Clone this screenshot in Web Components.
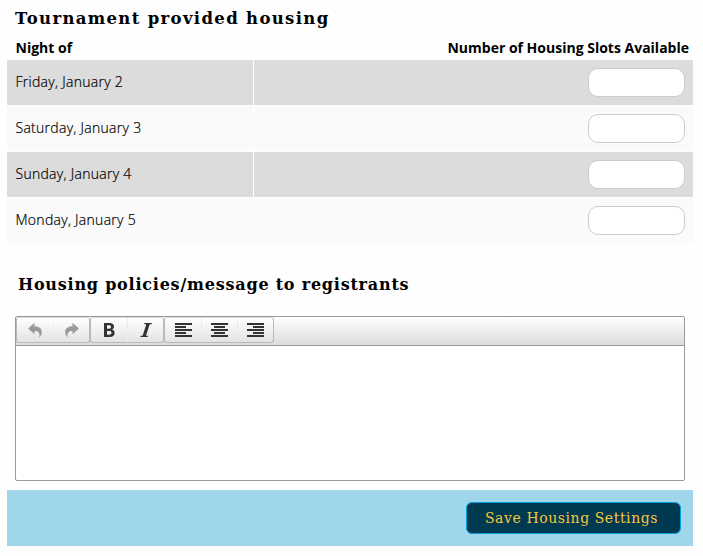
<!DOCTYPE html>
<html lang="en">
<head>
<meta charset="utf-8">
<title>Housing settings</title>
<style>
html,body{margin:0;padding:0;background:#fefefe}
body{width:703px;height:556px;overflow:hidden;font-family:"Open Sans",sans-serif;font-size:14px;color:#000}
</style>
</head>
<body>
<housing-page></housing-page>
<script>
const define = (name, html) => customElements.define(name, class extends HTMLElement {
  constructor() {
    super();
    this.attachShadow({mode: 'open'}).innerHTML = html;
  }
});

define('slab-heading', `
<style>
:host{display:block;white-space:nowrap;font-family:"DejaVu Serif",serif;font-weight:700;color:#000}
h4{margin:0;font:inherit}
</style><h4><slot></slot></h4>`);

define('slot-input', `
<style>
:host{display:block;width:97px;height:29px}
input{display:block;box-sizing:border-box;width:100%;height:100%;margin:0;padding:0 8px;border:1px solid #ccc;border-radius:10px;background:#fff;font:inherit;outline:0}
</style><input type="text">`);

define('night-row', `
<style>
:host{display:grid;grid-template-columns:246px 1fr;column-gap:1px;height:45px;--c:#dcdcdc}
:host([light]){--c:#fafafa}
div{background:var(--c);display:flex;align-items:center;box-sizing:border-box;padding:0 8px 0 9px}
.n{font-weight:350;font-size:14px;letter-spacing:.28px;line-height:20px;padding-bottom:1px;padding-left:8.500px;color:#000;-webkit-text-stroke:.2px #000}
.s{justify-content:flex-end}
</style><div class="n"><slot></slot></div><div class="s"><slot-input></slot-input></div>`);

define('nights-table', `
<style>
:host{display:block}
header{display:flex;justify-content:space-between;height:27px;padding:0 4px 0 8.500px;font-weight:700;font-size:14px;line-height:30px}
.rows{display:grid;row-gap:1px;background:#fff}
</style>
<header><span>Night of</span><span>Number of Housing Slots Available</span></header>
<div class="rows"><slot></slot></div>`);

define('tool-button', `
<style>
:host{display:flex;align-items:center;justify-content:center;width:35px;height:24px;border-left:1px solid #ececec;box-sizing:content-box}
:host(:first-child){border-left:0;width:36px}
:host([off]){opacity:.45}
</style><slot></slot>`);

define('tool-group', `
<style>
:host{display:flex;box-sizing:border-box;height:26px;border:1px solid #b9b9b9;border-top-color:#d8d8d8;border-radius:3px;background:linear-gradient(#fff,#e3e3e3)}
</style><slot></slot>`);

define('text-editor', `
<style>
:host{display:flex;flex-direction:column;box-sizing:border-box;height:165px;border:1px solid #999;border-radius:2px;background:#fff;overflow:hidden}
nav{display:flex;box-sizing:border-box;height:29px;border-bottom:1px solid #999;background:linear-gradient(#fff,#dcdcdc)}
svg{display:block;overflow:visible}
</style>
<nav>
<tool-group>
 <tool-button off><svg width="16" height="16" viewBox="0 0 16 16"><path fill="#333" d="M1 6.500 7.500 .8V4.200c4.800 0 7.500 2.300 7.300 6.300-.1 2-1.200 3.700-2.800 5 .8-2.300.7-4-.3-5.100-.9-1-2.200-1.400-4.200-1.400v3.300z"/></svg></tool-button>
 <tool-button off><svg width="16" height="16" viewBox="0 0 16 16"><path fill="#333" d="M15 6.500 8.500 .8V4.200c-4.800 0-7.500 2.300-7.300 6.300 .1 2 1.200 3.700 2.800 5-.8-2.300-.7-4 .3-5.100.9-1 2.200-1.400 4.200-1.400v3.300z"/></svg></tool-button>
</tool-group>
<tool-group>
 <tool-button><svg width="16" height="16" viewBox="0 0 16 16"><path fill="#333" fill-rule="evenodd" d="M3 1h5.500c3 0 4.500 1.300 4.500 3.600 0 1.500-.7 2.500-2 3 1.700.4 2.600 1.600 2.600 3.300 0 2.700-1.700 4.100-4.800 4.100H3zM6 3.300v3.400h2c1.400 0 2-.6 2-1.700s-.6-1.700-2-1.700zM6 9v3.700h2.300c1.500 0 2.200-.6 2.200-1.900S9.800 9 8.300 9z"/></svg></tool-button>
 <tool-button><svg width="16" height="16" viewBox="0 0 16 16"><path fill="#333" d="M6.500 1H14l-.4 1.200h-1.900L8 13.800H10L9.600 15H2.300l.4-1.200h1.900L8.300 2.200H6.100z"/></svg></tool-button>
</tool-group>
<tool-group>
 <tool-button><svg width="17" height="14" shape-rendering="crispEdges"><path fill="#333" d="M0 0h17v2H0zM0 3h11v2H0zM0 6h17v2H0zM0 9h11v2H0zM0 12h17v2H0z"/></svg></tool-button>
 <tool-button><svg width="17" height="14" shape-rendering="crispEdges"><path fill="#333" d="M0 0h17v2H0zM3 3h11v2H3zM0 6h17v2H0zM3 9h11v2H3zM0 12h17v2H0z"/></svg></tool-button>
 <tool-button><svg width="17" height="14" shape-rendering="crispEdges"><path fill="#333" d="M0 0h17v2H0zM6 3h11v2H6zM0 6h17v2H0zM6 9h11v2H6zM0 12h17v2H0z"/></svg></tool-button>
</tool-group>
</nav>`);

define('save-button', `
<style>
:host{display:block}
button{display:block;box-sizing:border-box;width:215px;height:32px;margin:0;padding:0 4px 0 0;border:1px solid #00a0dc;border-radius:6px;background:#003a50;color:#f9c440;white-space:nowrap;font-family:"DejaVu Serif",serif;font-size:14px;letter-spacing:.57px;line-height:30px}
</style><button><slot></slot></button>`);

define('action-bar', `
<style>
:host{display:flex;justify-content:flex-end;align-items:center;box-sizing:border-box;height:56px;padding-right:12px;background:#9fd6e9}
</style><slot></slot>`);

define('housing-page', `
<style>
:host{display:flex;flex-direction:column;box-sizing:border-box;width:703px;height:556px;padding:5px 10px 0 7px}
.a{height:28px;line-height:28px;font-size:16.500px;letter-spacing:1.330px;padding-left:8px}
.b{height:28px;line-height:28px;margin-top:28px;font-size:16px;letter-spacing:.78px;padding-left:11px}
text-editor{margin:17px 8px 9px}
</style>
<slab-heading class="a">Tournament provided housing</slab-heading>
<nights-table>
<night-row>Friday, January 2</night-row>
<night-row light>Saturday, January 3</night-row>
<night-row>Sunday, January 4</night-row>
<night-row light>Monday, January 5</night-row>
</nights-table>
<slab-heading class="b">Housing policies/message to registrants</slab-heading>
<text-editor></text-editor>
<action-bar><save-button>Save Housing Settings</save-button></action-bar>`);
</script>
</body>
</html>
